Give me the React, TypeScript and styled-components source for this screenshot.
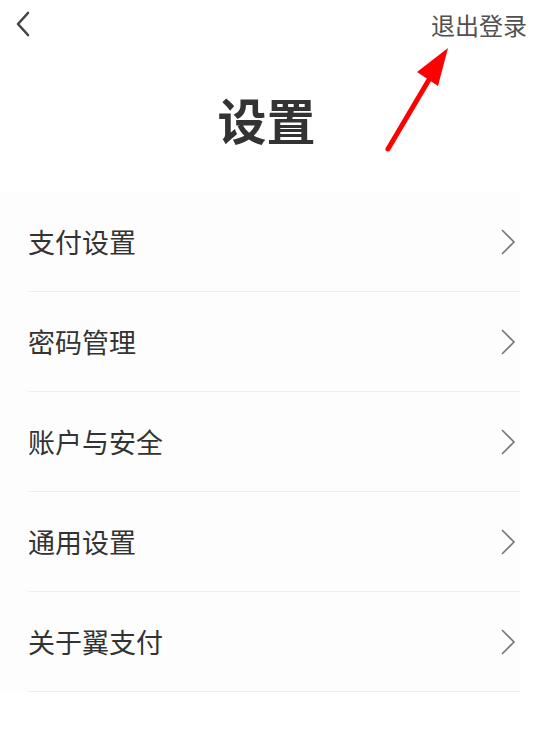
import React from "react";
import styled, { createGlobalStyle } from "styled-components";

const GlobalStyle = createGlobalStyle`
  html, body {
    margin: 0;
    padding: 0;
    background: #ffffff;
    font-family: "Noto Sans CJK SC", "Noto Sans", sans-serif;
  }
`;

const Page = styled.div`
  width: 533px;
  height: 753px;
  position: relative;
  overflow: hidden;
  background: #ffffff;
`;

const TopBar = styled.div`
  height: 50px;
  display: flex;
  align-items: center;
  justify-content: space-between;
  padding: 0 6px 0 11px;
`;

const BackButton = styled.button`
  border: 0;
  background: none;
  padding: 0;
  width: 26px;
  height: 30px;
  display: flex;
  align-items: center;
  justify-content: center;
  margin-top: -2px;
`;

const Logout = styled.span`
  font-size: 24px;
  color: #505050;
  margin-top: -2px;
`;

const Title = styled.h1`
  margin: 38px 0 0;
  text-align: center;
  font-size: 49px;
  font-weight: 700;
  color: #333333;
  line-height: 62px;
`;

const Card = styled.div`
  margin-top: 42px;
  width: 520px;
  background: #fdfdfd;
  padding-left: 28px;
  box-sizing: border-box;
`;

const Row = styled.div`
  height: 100px;
  display: flex;
  align-items: center;
  justify-content: space-between;
  border-bottom: 1.5px solid #efefef;
  box-sizing: border-box;
  padding-right: 4px;
`;

const Label = styled.span`
  font-size: 27px;
  color: #333333;
`;

const Arrow = styled.svg`
  position: absolute;
  left: 0;
  top: 0;
  pointer-events: none;
`;

const items = ["支付设置", "密码管理", "账户与安全", "通用设置", "关于翼支付"];

export default function App() {
  return (
    <Page>
      <GlobalStyle />
      <TopBar>
        <BackButton>
          <svg width="20" height="28" viewBox="0 0 20 28">
            <polyline
              points="14,3 4,14 14,25"
              fill="none"
              stroke="#444"
              strokeWidth="2.6"
              strokeLinecap="round"
              strokeLinejoin="round"
            />
          </svg>
        </BackButton>
        <Logout>退出登录</Logout>
      </TopBar>
      <Title>设置</Title>
      <Card>
        {items.map((t) => (
          <Row key={t}>
            <Label>{t}</Label>
            <svg width="16" height="26" viewBox="0 0 16 26">
              <polyline
                points="2,1 14,13 2,25"
                fill="none"
                stroke="#777"
                strokeWidth="1.6"
              />
            </svg>
          </Row>
        ))}
      </Card>
      <Arrow width="533" height="753">
        <line x1="388" y1="149" x2="430" y2="78" stroke="#ff0000" strokeWidth="5" strokeLinecap="round" />
        <polygon points="448,48 417,72 438,86" fill="#ff0000" />
      </Arrow>
    </Page>
  );
}
